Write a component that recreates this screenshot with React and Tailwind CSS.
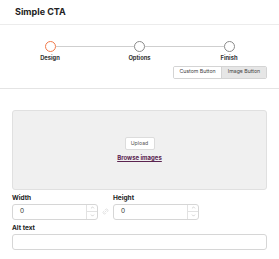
import { ChevronUp, ChevronDown, Link2 } from 'lucide-react'

const font = { fontFamily: 'Inter, "Noto Sans", sans-serif' }

function Step({ active }) {
  return (
    <span
      className={`w-[11px] h-[11px] rounded-full border-[1.5px] bg-white shrink-0 ${
        active ? 'border-[#f27a4a]' : 'border-[#8a8a8a]'
      }`}
    />
  )
}

function NumberField() {
  return (
    <div className="flex w-[86px] h-[16px] border border-[#d6d6d6] rounded-[3px] bg-white">
      <span className="flex-1 flex items-center pl-[7px] text-[6.5px] text-[#333]">0</span>
      <div className="w-[11px] flex flex-col border-l border-[#e2e2e2] text-[#9a9a9a]">
        <span className="flex-1 flex items-center justify-center border-b border-[#e2e2e2]">
          <ChevronUp size={5} strokeWidth={2} />
        </span>
        <span className="flex-1 flex items-center justify-center">
          <ChevronDown size={5} strokeWidth={2} />
        </span>
      </div>
    </div>
  )
}

export default function App() {
  return (
    <div className="w-[279px] h-[259px] bg-white overflow-hidden" style={font}>
      {/* header */}
      <div className="h-[25px] flex items-center px-[15px] border-b border-[#ececec]">
        <span className="text-[9px] font-bold text-[#222]">Simple CTA</span>
      </div>

      {/* stepper */}
      <div className="pt-[16px] px-[30px]">
        <div className="flex items-center px-[14.5px]">
          <Step active />
          <span className="flex-1 h-[1.5px] bg-[#cfcfcf]" />
          <Step />
          <span className="flex-1 h-[1.5px] bg-[#cfcfcf]" />
          <Step />
        </div>
        <div className="flex justify-between mt-[2px] text-[5.8px] font-bold text-[#333]">
          <span className="w-[40px] text-center">Design</span>
          <span className="w-[40px] text-center">Options</span>
          <span className="w-[40px] text-center">Finish</span>
        </div>
      </div>

      {/* toggle */}
      <div className="flex justify-end pr-[12px] mt-[3px]">
        <div className="flex h-[13px] border border-[#d4d4d4] rounded-[2px] text-[5.2px] text-[#444] overflow-hidden">
          <span className="w-[47px] flex items-center justify-center bg-white">Custom Button</span>
          <span className="w-[45px] flex items-center justify-center bg-[#e6e6e6] border-l border-[#d4d4d4]">Image Button</span>
        </div>
      </div>

      <div className="mt-[9px] border-b border-[#e4e4e4]" />

      {/* body */}
      <div className="px-[12px] pt-[21px]">
        <div className="h-[80px] bg-[#f0f0f0] border border-[#e0e0e0] rounded-[3px] flex flex-col items-center justify-center">
          <span className="h-[13px] w-[30px] flex items-center justify-center bg-white border border-[#dcdcdc] rounded-[2px] text-[5.2px] text-[#555]">
            Upload
          </span>
          <span className="mt-[3px] text-[6px] font-bold text-[#5b2450] underline">Browse images</span>
        </div>

        <div className="flex items-end mt-[3px]">
          <div className="flex flex-col">
            <span className="text-[6.5px] font-bold text-[#222] h-[11px] leading-[11px]">Width</span>
            <NumberField />
          </div>
          <span className="w-[15px] h-[16px] flex items-center justify-center text-[#d2d2d2]">
            <Link2 size={7} strokeWidth={2} className="-rotate-45" />
          </span>
          <div className="flex flex-col">
            <span className="text-[6.5px] font-bold text-[#222] h-[11px] leading-[11px]">Height</span>
            <NumberField />
          </div>
        </div>

        <span className="block mt-[3px] text-[6.5px] font-bold text-[#222] h-[11px] leading-[11px]">Alt text</span>
        <div className="h-[16px] border border-[#d6d6d6] rounded-[3px] bg-white" />
      </div>
    </div>
  )
}
